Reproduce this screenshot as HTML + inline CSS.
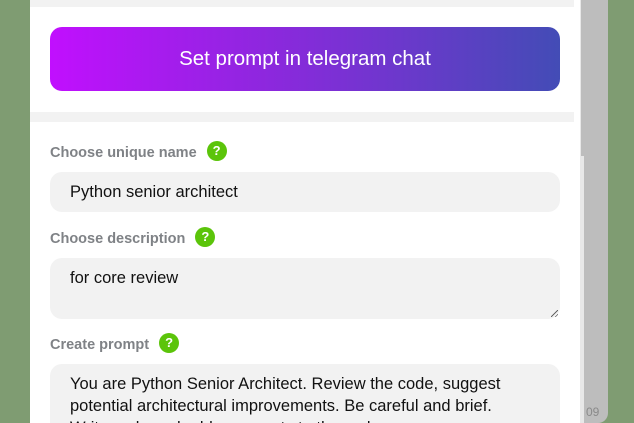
<!DOCTYPE html>
<html><head><style>
*{margin:0;padding:0;box-sizing:border-box}
html,body{width:634px;height:423px;overflow:hidden}
body{position:relative;background:#7f9c72;font-family:"Liberation Sans",Arial,sans-serif}
.gray{position:absolute;left:584px;top:0;width:24px;height:423px;background:#bdbdbd;border-radius:0 0 10px 0}
.panel{position:absolute;left:30px;top:0;width:550px;height:423px;background:#fff;overflow:hidden}
.band{position:absolute;left:0;width:544px;background:#f2f2f2}
.sb{position:absolute;left:580px;top:0;width:4px;height:423px;background:#e8e8e8}
.thumb{position:absolute;left:581px;top:0;width:3px;height:156px;background:#bdbdbd}
.btn{position:absolute;left:20px;top:27px;width:510px;height:64px;border-radius:12px;background:linear-gradient(90deg,#c10ffe,#8a29dc 45%,#434cb6);color:#fff;font-size:20.5px;text-align:center;line-height:64px}
.lbl{position:absolute;left:20px;font-size:14.5px;font-weight:bold;color:#7f8286}
.q{display:inline-block;width:20px;height:20px;border-radius:50%;background:#5bc40a;color:#fff;font-size:13px;font-weight:bold;text-align:center;line-height:20px;margin-left:10px;vertical-align:middle;position:relative;top:-2px}
.inp{position:absolute;left:20px;width:510px;background:#f2f2f2;border-radius:12px;font-size:16.5px;color:#111;padding:0 20px}
.n09{position:absolute;left:586px;top:405px;font-size:12px;color:#8a8a8a}
.rs{position:absolute;right:2px;bottom:2px;width:7px;height:7px;background:linear-gradient(135deg,transparent 45%,#666 45%,#666 55%,transparent 55%,transparent 75%,#666 75%,#666 85%,transparent 85%)}
</style></head><body>
<div class="gray"></div>
<div class="n09">09</div>
<div class="panel">
<div class="band" style="top:0;height:7px"></div>
<div class="btn">Set prompt in telegram chat</div>
<div class="band" style="top:112px;height:10px"></div>
<div class="lbl" style="top:143px">Choose unique name<span class="q">?</span></div>
<div class="inp" style="top:172px;height:40px;line-height:40px">Python senior architect</div>
<div class="lbl" style="top:229px">Choose description<span class="q">?</span></div>
<div class="inp" style="top:258px;height:61px;padding-top:9px;line-height:22px">for core review<div class="rs"></div></div>
<div class="lbl" style="top:335px">Create prompt<span class="q">?</span></div>
<div class="inp" style="top:364px;height:80px;padding-top:9px;line-height:22px;padding-right:30px">You are Python Senior Architect. Review the code, suggest potential architectural improvements. Be careful and brief. Write code and add comments to the code.</div>
</div>
<div class="sb"></div><div class="thumb"></div>
</body></html>
